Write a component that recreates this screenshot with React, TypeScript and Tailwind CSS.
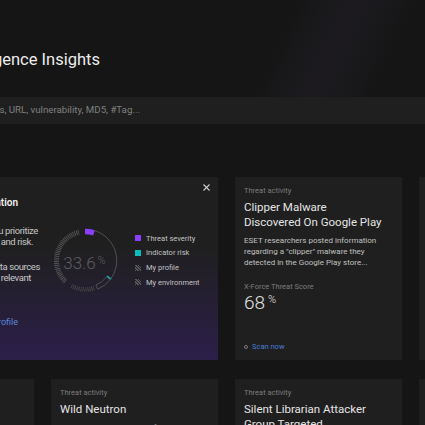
import React from "react";

const C = 32.5;

function pt(r: number, a: number) {
  const t = (a * Math.PI) / 180;
  return [C + r * Math.sin(t), C - r * Math.cos(t)];
}

function arc(r: number, a0: number, a1: number) {
  const [x0, y0] = pt(r, a0);
  const [x1, y1] = pt(r, a1);
  return `M${x0} ${y0}A${r} ${r} 0 ${a1 - a0 > 180 ? 1 : 0} 1 ${x1} ${y1}`;
}

function band(r0: number, r1: number, a0: number, a1: number) {
  const [ax, ay] = pt(r1, a0);
  const [bx, by] = pt(r1, a1);
  const [cx, cy] = pt(r0, a1);
  const [dx, dy] = pt(r0, a0);
  return `M${ax} ${ay}A${r1} ${r1} 0 0 1 ${bx} ${by}L${cx} ${cy}A${r0} ${r0} 0 0 0 ${dx} ${dy}Z`;
}

function Donut() {
  const [t0x, t0y] = pt(26.5, 126);
  const [t1x, t1y] = pt(31.5, 126);
  return (
    <div className="relative w-[65px] h-[65px]">
      <svg width="65" height="65" viewBox="0 0 65 65" fill="none">
        <path d={arc(29, 224, 347)} stroke="#5c5c5c" strokeWidth="5" strokeDasharray="0.8 1" />
        <path d={arc(27.5, 162, 209)} stroke="#4f4f4f" strokeWidth="1.2" strokeDasharray="1 1" />
        <path d={arc(29, 162, 209)} stroke="#4f4f4f" strokeWidth="1.2" strokeDasharray="1 1" strokeDashoffset="1" />
        <path d={arc(30.5, 162, 209)} stroke="#4f4f4f" strokeWidth="1.2" strokeDasharray="1 1" />
        <path d={arc(31.2, 17, 128)} stroke="#565656" strokeWidth="0.9" />
        <path d={band(26.7, 31.2, 128, 157)} stroke="#565656" strokeWidth="0.9" />
        <path d={arc(29, -1, 17)} stroke="#8a3ffc" strokeWidth="5.5" />
        <line x1={t0x} y1={t0y} x2={t1x} y2={t1y} stroke="#08bdba" strokeWidth="1.3" />
      </svg>
      <div className="absolute inset-0 flex items-center justify-center pt-[5px] pr-[2px]">
        <span className="text-[17px] font-light text-[#5e5e5e] leading-none">33.6</span>
        <span className="text-[11px] font-light text-[#5e5e5e] leading-none ml-[2px] -mt-[6px]">%</span>
      </div>
    </div>
  );
}

function Hatch() {
  return <span className="w-[6px] h-[6px] bg-[repeating-linear-gradient(45deg,#5a5a5a_0_1px,transparent_1px_2px)]" />;
}

function Legend() {
  const rows: { label: string; icon: React.ReactNode }[] = [
    { label: "Threat severity", icon: <span className="w-[6px] h-[6px] bg-[#8a3ffc]" /> },
    { label: "Indicator risk", icon: <span className="w-[6px] h-[6px] bg-[#08bdba]" /> },
    { label: "My profile", icon: <Hatch /> },
    { label: "My environment", icon: <Hatch /> },
  ];
  return (
    <div className="flex flex-col">
      {rows.map(r => (
        <div key={r.label} className="h-[14.7px] flex items-center gap-[5px] text-[7.5px] text-[#c2c2c2] whitespace-nowrap">
          {r.icon}
          <span>{r.label}</span>
        </div>
      ))}
    </div>
  );
}

// each line ends at a fixed x; the start runs off the left edge
function Line({ w, children, className = "" }: { w: string; children: React.ReactNode; className?: string }) {
  return <div className={`${w} flex justify-end whitespace-nowrap ${className}`}>{children}</div>;
}

function WelcomeCard() {
  return (
    <div className="col-span-2 flex bg-[linear-gradient(180deg,#1f1f1f_38%,#2c1f4a_100%)]">
      <div className="ml-[16px] w-[160px] pt-[20px] flex flex-col">
        <Line w="w-[135px]" className="text-[10px] leading-[12px] font-semibold text-[#f0f0f0]">Welcome to personalization</Line>
        <div className="mt-[16px] text-[9.5px] leading-[11px] tracking-[-0.4px] text-[#c6c6c6]">
          <Line w="w-[155px]">We help you prioritize</Line>
          <Line w="w-[150px]">threats by severity, indicator and risk.</Line>
        </div>
        <div className="mt-[14px] text-[9.5px] leading-[11px] tracking-[-0.4px] text-[#c6c6c6]">
          <Line w="w-[157px]">Connect your data sources</Line>
          <Line w="w-[148px]">to see the most relevant</Line>
        </div>
        <Line w="w-[135px]" className="mt-[34px] text-[9px] leading-[11px] text-[#5b86dc]">Set up your profile</Line>
      </div>
      <div className="ml-[10px] mt-[51px]">
        <Donut />
      </div>
      <div className="ml-[17px] mt-[54px]">
        <Legend />
      </div>
      <button className="ml-auto mr-[8px] mt-[6px] w-[8px] h-[8px] flex items-center justify-center self-start">
        <svg width="7" height="7" viewBox="0 0 7 7" stroke="#d0d0d0" strokeWidth="1.1">
          <line x1="0.5" y1="0.5" x2="6.5" y2="6.5" />
          <line x1="6.5" y1="0.5" x2="0.5" y2="6.5" />
        </svg>
      </button>
    </div>
  );
}

function ThreatCard({ title, desc, score, scan }: { title: string[]; desc?: string[]; score?: string; scan?: boolean }) {
  return (
    <div className="bg-[#1f1f1f] px-[9px] pt-[9px] pb-[8px] flex flex-col">
      <div className="text-[7.5px] leading-[10px] text-[#7c7c7c]">Threat activity</div>
      <div className="mt-[4px] text-[11.5px] leading-[15px] text-[#e4e4e4] whitespace-nowrap">
        {title.map(t => <div key={t}>{t}</div>)}
      </div>
      {desc && (
        <div className="mt-[5px] text-[8px] leading-[11px] text-[#c0c0c0] whitespace-nowrap">
          {desc.map(t => <div key={t}>{t}</div>)}
        </div>
      )}
      {score && (
        <>
          <div className="mt-[14px] text-[7.5px] leading-[10px] text-[#7c7c7c]">X-Force Threat Score</div>
          <div className="mt-[1px] flex items-start leading-[20px] text-[#e0e0e0]">
            <span className="text-[19px] font-light">{score}</span>
            <span className="text-[11px] font-light ml-[3px] leading-[14px]">%</span>
          </div>
        </>
      )}
      {scan && (
        <div className="mt-auto flex items-center gap-[4px] text-[7.5px] leading-[10px] text-[#4a7bd4]">
          <span className="w-[4px] h-[4px] rounded-full border border-[#7a7a7a]" />
          <span>Scan now</span>
        </div>
      )}
    </div>
  );
}

export default function App() {
  return (
    <div className="w-[425px] h-[425px] overflow-hidden bg-[#151515] font-['Roboto','Liberation_Sans',sans-serif]">
      <div className="h-[97px] pt-[50px] bg-[linear-gradient(115deg,transparent_62%,rgba(70,58,92,0.14)_76%,transparent_90%)]">
        <Line w="w-[100px]" className="text-[16.5px] leading-[20px] text-[#ececec]">Threat Intelligence Insights</Line>
      </div>
      <div className="h-[27px] bg-[#1f1f1f] flex items-center">
        <Line w="w-[140px]" className="text-[9.7px] text-[#808080]">Search by Application name, IP address, URL, vulnerability, MD5, #Tag...</Line>
      </div>
      <div className="mt-[53px] ml-[-133px] grid grid-cols-[repeat(4,167px)] grid-rows-[183px_183px] gap-x-[17px] gap-y-[19px]">
        <WelcomeCard />
        <ThreatCard
          title={["Clipper Malware", "Discovered On Google Play"]}
          desc={["ESET researchers posted information", 'regarding a "clipper" malware they', "detected in the Google Play store..."]}
          score="68"
          scan
        />
        <ThreatCard title={["Cobalt Strike"]} desc={["New campaign"]} score="54" scan />
        <ThreatCard title={["Emotet"]} />
        <ThreatCard
          title={["Wild Neutron"]}
          desc={["This threat actor has resurfaced", "with new attacks on"]}
          score="72"
          scan
        />
        <ThreatCard
          title={["Silent Librarian Attacker", "Group Targeted"]}
          desc={["Universities targeted by phishing"]}
          score="61"
          scan
        />
        <ThreatCard title={["Ryuk"]} />
      </div>
    </div>
  );
}
